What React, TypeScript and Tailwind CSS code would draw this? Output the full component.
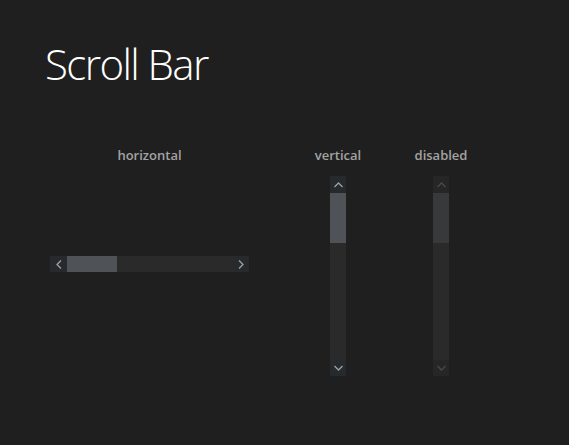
import React from 'react';

type Dir = 'up' | 'down' | 'left' | 'right';

const chevrons: Record<Dir, string> = {
  up: 'M1.5 6 L5.5 2 L9.5 6',
  down: 'M1.5 2 L5.5 6 L9.5 2',
  left: 'M6 1.5 L2 5.5 L6 9.5',
  right: 'M2 1.5 L6 5.5 L2 9.5',
};

const Arrow = ({ dir, color }: { dir: Dir; color: string }) => {
  const vertical = dir === 'up' || dir === 'down';
  return (
    <svg
      width={vertical ? 11 : 8}
      height={vertical ? 8 : 11}
      viewBox={vertical ? '0 0 11 8' : '0 0 8 11'}
      fill="none"
      stroke={color}
      strokeWidth="1.3"
    >
      <path d={chevrons[dir]} />
    </svg>
  );
};

const HorizontalBar = () => (
  <div className="flex h-[16px] w-[199px] bg-[#2a2a2a]">
    <div className="flex w-[17px] items-center justify-center bg-[#262a2d]">
      <Arrow dir="left" color="#a0a0a0" />
    </div>
    <div className="w-[50px] bg-[#4f5357]" />
    <div className="flex-1" />
    <div className="flex w-[16px] items-center justify-center bg-[#262a2d]">
      <Arrow dir="right" color="#a0a0a0" />
    </div>
  </div>
);

const VerticalBar = ({ disabled }: { disabled?: boolean }) => {
  const btn = disabled ? 'bg-[#262626]' : 'bg-[#262a2d]';
  const arrow = disabled ? '#4a4a4a' : '#a0a0a0';
  return (
    <div className="flex h-[200px] w-[16px] flex-col bg-[#2a2a2a]">
      <div className={`flex h-[17px] items-center justify-center ${btn}`}>
        <Arrow dir="up" color={arrow} />
      </div>
      <div className={`h-[50px] ${disabled ? 'bg-[#37393b]' : 'bg-[#4f5357]'}`} />
      <div className="flex-1" />
      <div className={`flex h-[16px] items-center justify-center ${btn}`}>
        <Arrow dir="down" color={arrow} />
      </div>
    </div>
  );
};

const Label = ({ children }: { children: React.ReactNode }) => (
  <div className="text-[13px] font-semibold leading-[16px] text-[#a3a3a3]">{children}</div>
);

export default function App() {
  return (
    <div
      className="h-[445px] w-full overflow-hidden bg-[#1f1f1f] pl-[45px] pt-[43px]"
      style={{ fontFamily: '"Open Sans", "Noto Sans", sans-serif' }}
    >
      <h1 className="text-[42px] font-light leading-[42px] tracking-[-1.6px] text-white">Scroll Bar</h1>
      <div className="mt-[62px] flex items-start">
        <div className="ml-[5px] flex w-[199px] flex-col items-center">
          <Label>horizontal</Label>
          <div className="mt-[93px]">
            <HorizontalBar />
          </div>
        </div>
        <div className="ml-[59px] flex w-[60px] flex-col items-center">
          <Label>vertical</Label>
          <div className="mt-[13px]">
            <VerticalBar />
          </div>
        </div>
        <div className="ml-[43px] flex w-[60px] flex-col items-center">
          <Label>disabled</Label>
          <div className="mt-[13px]">
            <VerticalBar disabled />
          </div>
        </div>
      </div>
    </div>
  );
}
